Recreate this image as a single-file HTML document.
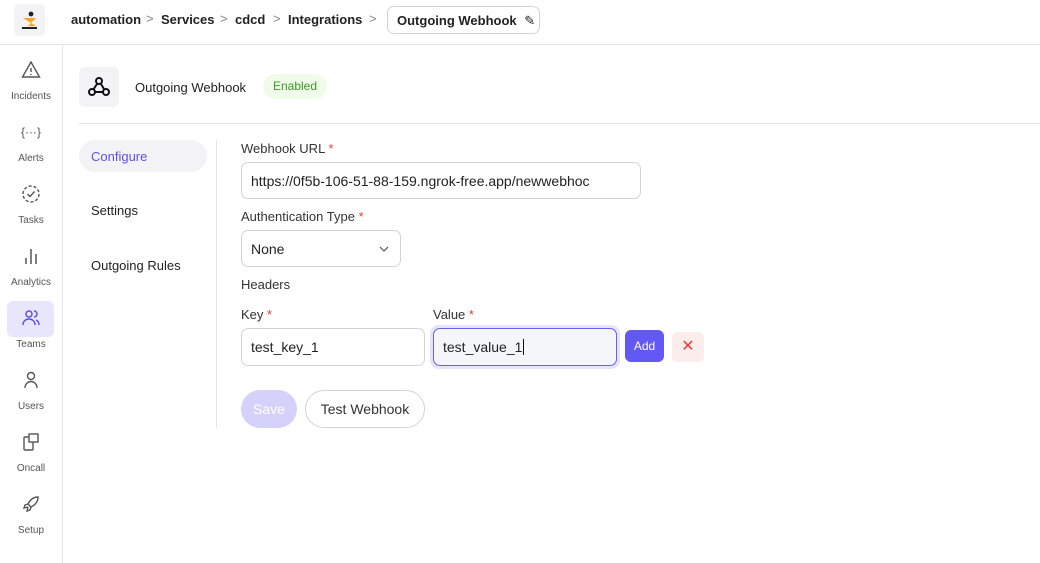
<!DOCTYPE html>
<html><head><meta charset="utf-8"><style>
*{box-sizing:border-box;margin:0;padding:0}
body{width:1040px;height:563px;overflow:hidden;background:#fff;font-family:"Liberation Sans",sans-serif;color:#1f1f24;position:relative}
.abs{position:absolute}
.top{left:0;top:0;width:1040px;height:45px;border-bottom:1px solid #e4e4e7}
.logo{left:14px;top:4px;width:31px;height:32px;background:#f3f3f5;border-radius:6px}
.bc{top:12px;font-size:13px;font-weight:bold;color:#222}
.chev{top:11px;font-size:13px;color:#888}
.side{left:0;top:45px;width:63px;height:518px;border-right:1px solid #e4e4e7}
.nav{left:0;width:62px;text-align:center;font-size:10px;color:#555}
.nav svg{display:block;margin:0 auto}
.nav div{margin-top:11px}
.lbl{font-size:13px;color:#333}
.req{color:#e53e3e}
.inp{border:1px solid #d4d4d8;border-radius:7px;font-size:14px;padding-left:9px;display:flex;align-items:center;background:#fff;color:#222}
</style></head><body>
<div class="abs top"></div>
<div class="abs logo"><svg width="31" height="32" viewBox="0 0 31 32"><circle cx="17" cy="10" r="2.4" fill="#222"/><path d="M9 14h13l-8 8h8z" fill="#f5a623"/><path d="M8 24h15" stroke="#222" stroke-width="2"/></svg></div>
<div class="abs bc" style="left:71px">automation</div><div class="abs chev" style="left:146px">&gt;</div>
<div class="abs bc" style="left:161px">Services</div><div class="abs chev" style="left:220px">&gt;</div>
<div class="abs bc" style="left:235px">cdcd</div><div class="abs chev" style="left:273px">&gt;</div>
<div class="abs bc" style="left:288px">Integrations</div><div class="abs chev" style="left:369px">&gt;</div>
<div class="abs" style="left:387px;top:6px;width:153px;height:28px;border:1px solid #d4d4d8;border-radius:7px;font-size:13px;font-weight:bold;padding:6px 0 0 9px;color:#222">Outgoing Webhook <span style="font-weight:normal;margin-left:4px">✎</span></div>
<div class="abs side"></div>
<div class="abs" style="left:7px;top:301px;width:47px;height:36px;background:#e8e6fd;border-radius:6px"></div>
<div class="abs nav" style="top:60px"><svg width="20" height="20" viewBox="0 0 20 20" fill="none" stroke="#555" stroke-width="1.4"><path d="M10 2L1.5 17h17z"/><path d="M10 8v4M10 14v1"/></svg><div>Incidents</div></div>
<div class="abs nav" style="top:122px"><svg width="20" height="20"><text x="10" y="14" text-anchor="middle" font-size="12" fill="#555" font-family="Liberation Sans">{···}</text></svg><div>Alerts</div></div>
<div class="abs nav" style="top:184px"><svg width="20" height="20" viewBox="0 0 20 20" fill="none" stroke="#555" stroke-width="1.4"><circle cx="10" cy="10" r="8" stroke-dasharray="3 2"/><path d="M6.5 10l2.5 2.5 4.5-5"/></svg><div>Tasks</div></div>
<div class="abs nav" style="top:246px"><svg width="20" height="20" viewBox="0 0 20 20" fill="none" stroke="#555" stroke-width="1.5"><path d="M5 12v6M10 3v15M15 8v10"/></svg><div>Analytics</div></div>
<div class="abs nav" style="top:308px;color:#555"><svg width="20" height="20" viewBox="0 0 20 20" fill="none" stroke="#5b50f0" stroke-width="1.5"><circle cx="8" cy="6" r="3"/><path d="M2 17c0-4 3-6 6-6s6 2 6 6M13 3a3 3 0 010 6M15 12c2 1 3 3 3 5"/></svg><div>Teams</div></div>
<div class="abs nav" style="top:370px"><svg width="20" height="20" viewBox="0 0 20 20" fill="none" stroke="#555" stroke-width="1.4"><circle cx="10" cy="6" r="3.5"/><path d="M4 18c0-4 3-6.5 6-6.5s6 2.5 6 6.5"/></svg><div>Users</div></div>
<div class="abs nav" style="top:432px"><svg width="20" height="20" viewBox="0 0 20 20" fill="none" stroke="#555" stroke-width="1.4"><rect x="3" y="5" width="9" height="13" rx="1"/><rect x="8" y="2" width="9" height="8" fill="#fff"/></svg><div>Oncall</div></div>
<div class="abs nav" style="top:494px"><svg width="20" height="20" viewBox="0 0 20 20" fill="none" stroke="#555" stroke-width="1.4"><path d="M17 3c-5 0-8 3-10 7l3 3c4-2 7-5 7-10zM7 10l-3 1-1 3 4-1M10 13l-1 3-3 1 1-4"/></svg><div>Setup</div></div>

<div class="abs" style="left:79px;top:67px;width:40px;height:40px;background:#f3f3f5;border-radius:6px"><svg width="40" height="40" viewBox="0 0 40 40" fill="none" stroke="#111" stroke-width="2"><circle cx="20" cy="14" r="3"/><circle cx="13" cy="25" r="3"/><circle cx="27" cy="25" r="3"/><path d="M18 17l-4 6M22 17l3 5M16 25h8"/></svg></div>
<div class="abs" style="left:135px;top:80px;font-size:13px;color:#222">Outgoing Webhook</div>
<div class="abs" style="left:263px;top:74px;width:64px;height:25px;background:#f0fbe9;border-radius:13px;color:#3a9d23;font-size:12px;text-align:center;line-height:25px">Enabled</div>
<div class="abs" style="left:79px;top:123px;width:961px;height:1px;background:#e4e4e7"></div>

<div class="abs" style="left:79px;top:140px;width:128px;height:32px;background:#f3f3f6;border-radius:16px;color:#5b50f0;font-size:13px;padding:9px 0 0 12px">Configure</div>
<div class="abs" style="left:91px;top:203px;font-size:13px;color:#222">Settings</div>
<div class="abs" style="left:91px;top:258px;font-size:13px;color:#222">Outgoing Rules</div>
<div class="abs" style="left:216px;top:140px;width:1px;height:288px;background:#e4e4e7"></div>

<div class="abs lbl" style="left:241px;top:141px">Webhook URL <span class="req">*</span></div>
<div class="abs inp" style="left:241px;top:162px;width:400px;height:37px;overflow:hidden;white-space:nowrap">https://0f5b-106-51-88-159.ngrok-free.app/newwebhoc</div>
<div class="abs lbl" style="left:241px;top:209px">Authentication Type <span class="req">*</span></div>
<div class="abs inp" style="left:241px;top:230px;width:160px;height:37px">None<svg class="abs" style="left:136px;top:13px" width="12" height="10" viewBox="0 0 12 10"><path d="M2 3l4 4 4-4" fill="none" stroke="#666" stroke-width="1.3"/></svg></div>
<div class="abs lbl" style="left:241px;top:277px">Headers</div>
<div class="abs lbl" style="left:241px;top:307px">Key <span class="req">*</span></div>
<div class="abs lbl" style="left:433px;top:307px">Value <span class="req">*</span></div>
<div class="abs inp" style="left:241px;top:328px;width:184px;height:38px">test_key_1</div>
<div class="abs" style="left:430px;top:325px;width:190px;height:44px;border-radius:9px;background:#e5e3fd"></div>
<div class="abs inp" style="left:433px;top:328px;width:184px;height:38px;border-color:#6a5ff5;background:#f5f6f8">test_value_1<span style="display:inline-block;width:1px;height:16px;background:#111;margin-left:1px"></span></div>
<div class="abs" style="left:625px;top:330px;width:39px;height:32px;background:#6259f5;border-radius:6px;color:#fff;font-size:12px;text-align:center;line-height:32px">Add</div>
<div class="abs" style="left:672px;top:332px;width:32px;height:30px;background:#fdecec;border-radius:6px;color:#e53e3e;font-size:16px;text-align:center;line-height:30px">✕</div>
<div class="abs" style="left:241px;top:390px;width:56px;height:38px;background:#d4d1fb;border-radius:19px;color:#fff;font-size:14px;text-align:center;line-height:38px">Save</div>
<div class="abs" style="left:305px;top:390px;width:120px;height:38px;border:1px solid #d4d4d8;border-radius:19px;color:#333;font-size:14px;text-align:center;line-height:36px">Test Webhook</div>
</body></html>
